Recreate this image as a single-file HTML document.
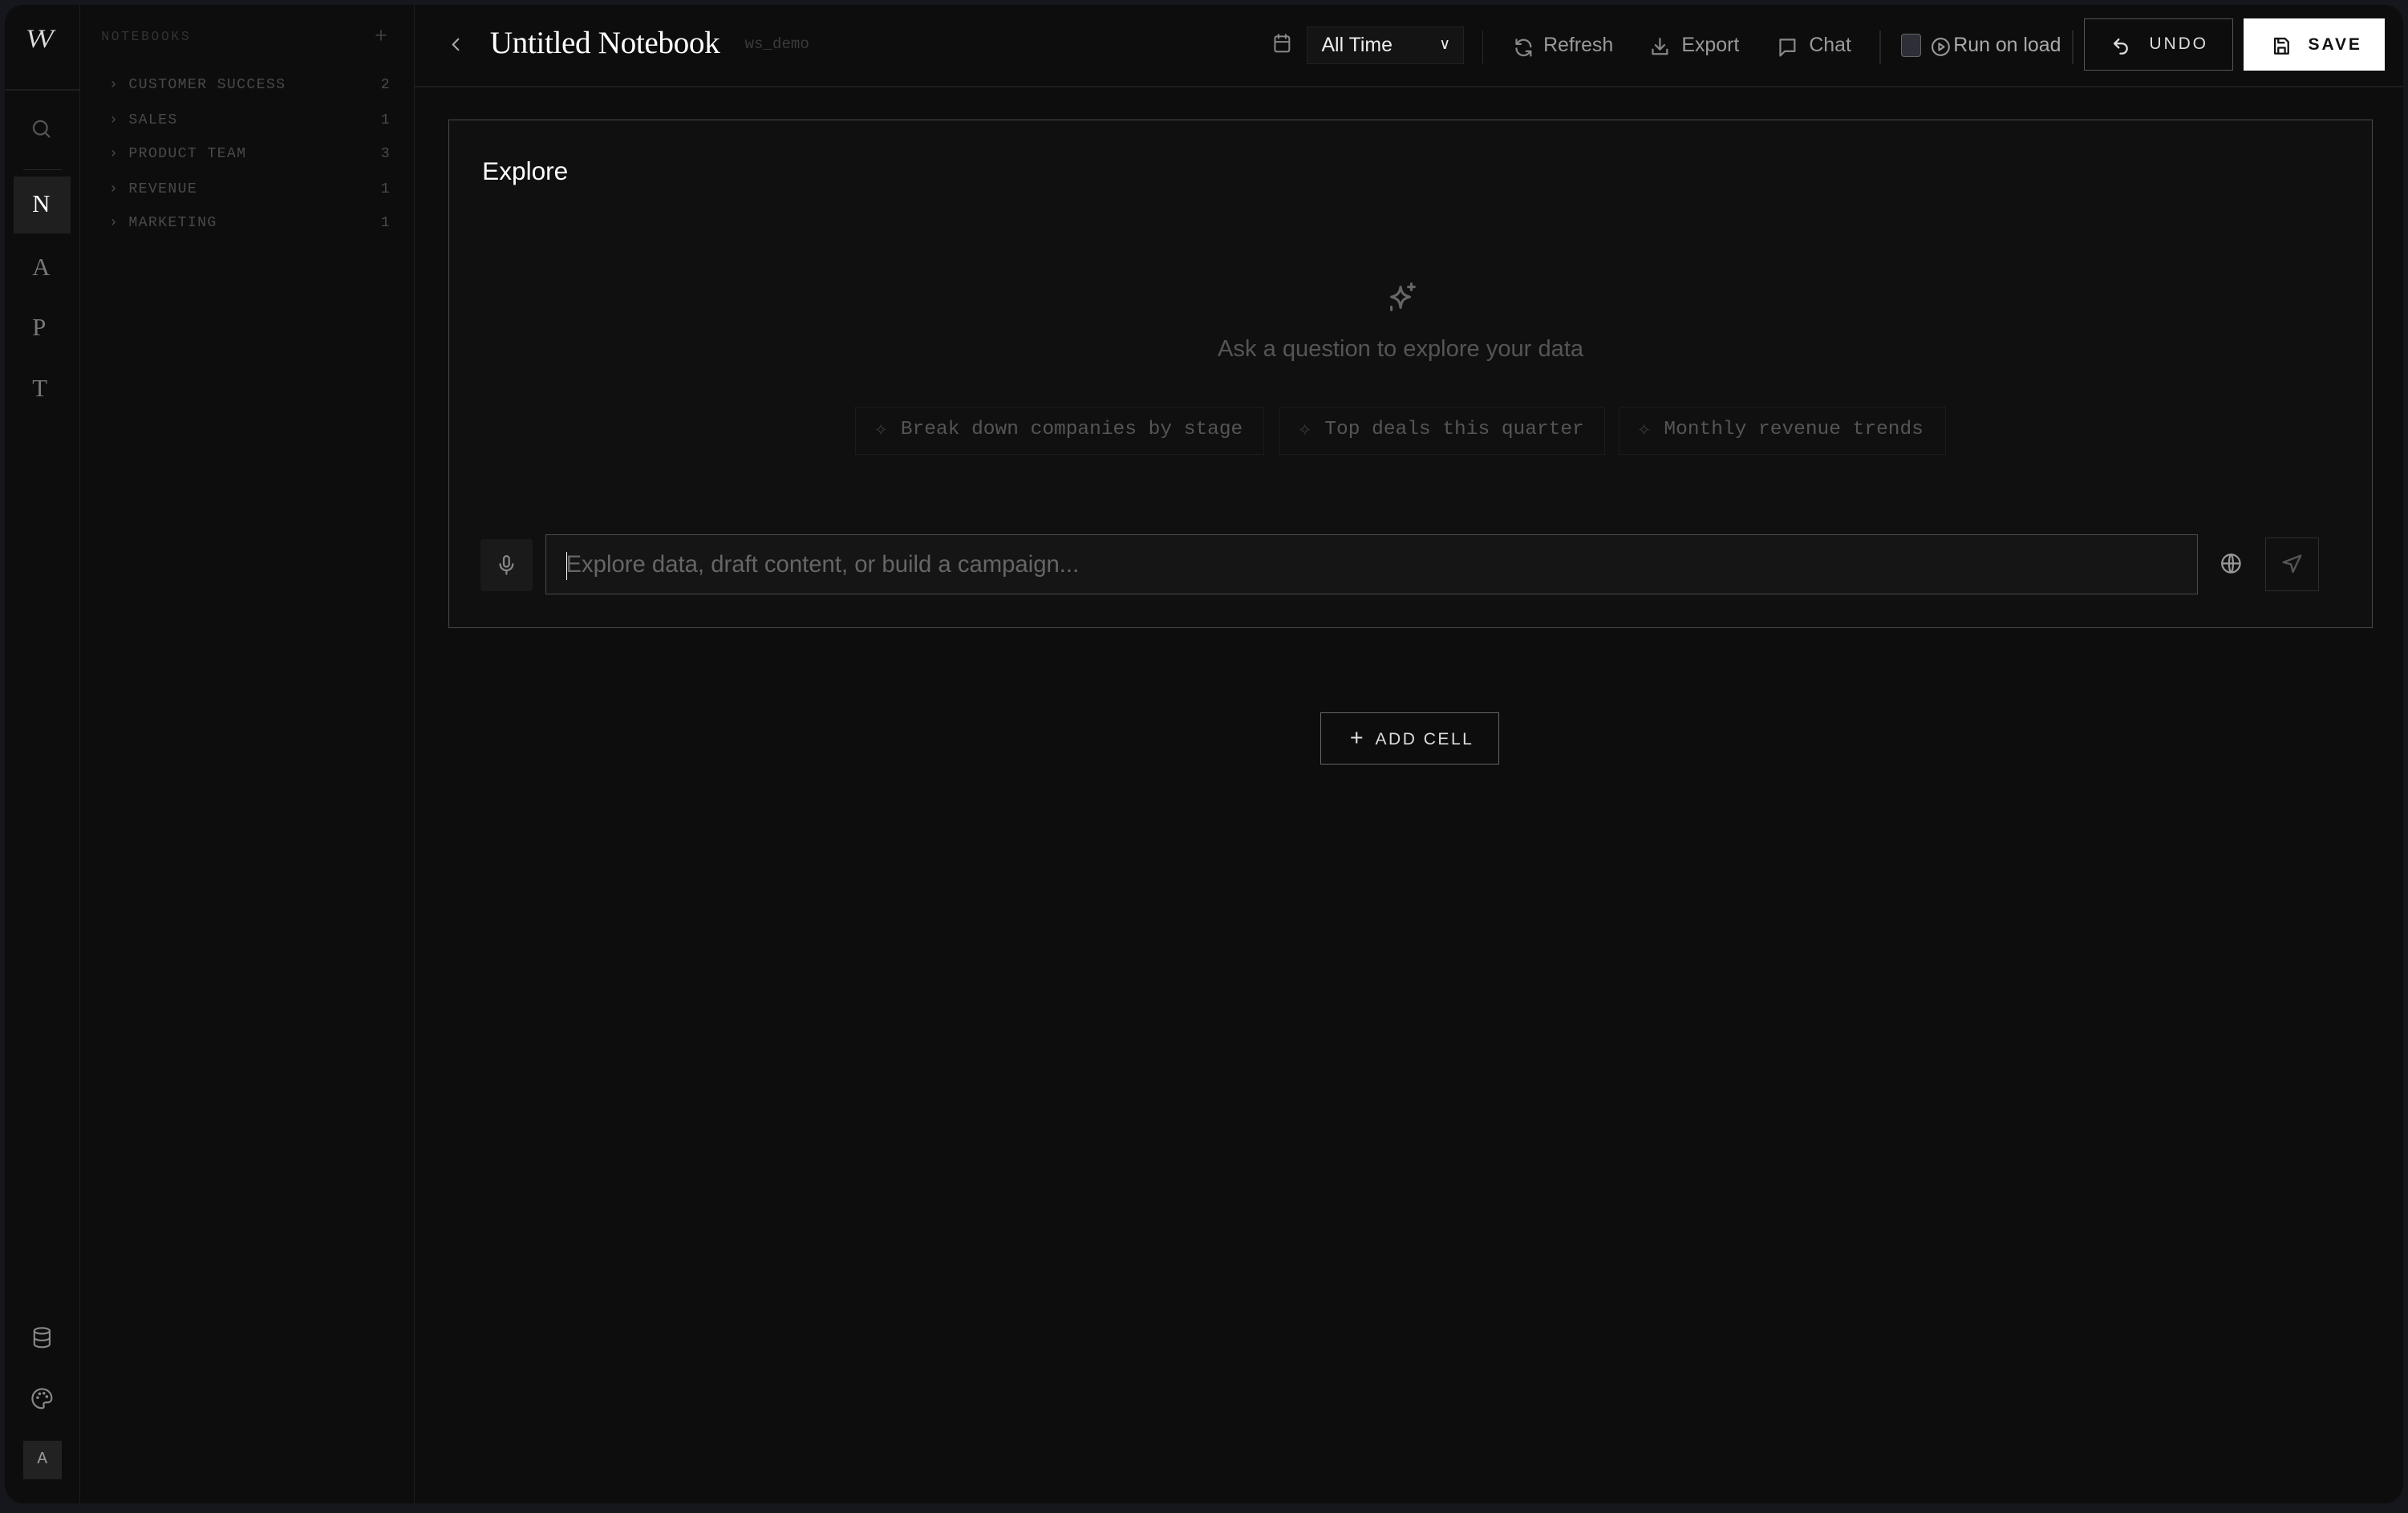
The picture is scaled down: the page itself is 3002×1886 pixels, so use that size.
<!DOCTYPE html>
<html><head><meta charset="utf-8"><style>
*{margin:0;padding:0;box-sizing:border-box}
html,body{width:3002px;height:1886px;overflow:hidden;background:#16171c}
#r{zoom:1.91454;width:1568px;height:985px;position:relative;font-family:"Liberation Sans",sans-serif;background:#16171c}
.app{position:absolute;left:3px;top:3px;width:1562px;height:976px;background:#0d0d0d;border-radius:12px;overflow:hidden}
.a{position:absolute}
.mono{font-family:"Liberation Mono",monospace}
svg{position:absolute;fill:none;stroke-linecap:round;stroke-linejoin:round}
.nb{font-family:"Liberation Mono",monospace;font-size:9.5px;letter-spacing:0.7px;color:#4a4a4a}
.tb{font-size:13px;color:#9a9a9a}
.chip{position:absolute;top:262px;height:31px;border:1px solid #1c1c1c;font-family:"Liberation Mono",monospace;font-size:12.8px;color:#555;line-height:29px;padding-left:29px}
.serif{font-family:"Liberation Serif",serif;color:#777;font-size:16px}
</style></head><body><div id="r"><div class="app">
<div class="a" style="left:0;top:0;width:49px;height:976px;border-right:1px solid #1e1e1e"></div>
<div class="a" style="left:0;top:55px;width:49px;height:1px;background:#1e1e1e"></div>
<div class="a" style="left:12px;top:107px;width:25px;height:1px;background:#262626"></div>
<div class="a serif" style="left:14px;top:13px;font-size:17px;color:#ddd;font-style:italic;letter-spacing:-3px">VV</div>
<svg style="left:17px;top:74px" width="14" height="14" viewBox="0 0 24 24" stroke="#555" stroke-width="2"><circle cx="11" cy="11" r="7.5"/><path d="M16.5 16.5 21 21"/></svg>
<div class="a" style="left:6px;top:112px;width:37px;height:37px;background:#1f1f1f"></div>
<div class="a serif" style="left:18px;top:121px;color:#fff;font-size:16px">N</div>
<div class="a serif" style="left:18px;top:162px">A</div>
<div class="a serif" style="left:18px;top:201px">P</div>
<div class="a serif" style="left:18px;top:241px">T</div>
<svg style="left:17px;top:860px" width="15" height="16" viewBox="0 0 24 24" stroke="#888" stroke-width="1.8"><ellipse cx="12" cy="5" rx="8" ry="3"/><path d="M4 5v14c0 1.7 3.6 3 8 3s8-1.3 8-3V5M4 12c0 1.7 3.6 3 8 3s8-1.3 8-3"/></svg>
<svg style="left:17px;top:900px" width="15" height="15" viewBox="0 0 24 24" stroke="#888" stroke-width="1.8"><path d="M12 2a10 10 0 0 0 0 20c1.5 0 2-1 2-2 0-1.5-1-2 0-3.2.8-1 2.5-.8 4-.8 2.5 0 4-1.8 4-4.5C22 6 17.5 2 12 2z"/><circle cx="7.5" cy="11" r=".6" fill="#888"/><circle cx="9.5" cy="7" r=".6" fill="#888"/><circle cx="14" cy="6.5" r=".6" fill="#888"/><circle cx="17" cy="10" r=".6" fill="#888"/></svg>
<div class="a" style="left:12px;top:935px;width:25px;height:25px;background:#222;color:#999;font-family:'Liberation Mono',monospace;font-size:11px;text-align:center;line-height:25px">A</div>
<div class="a" style="left:49px;top:0;width:218px;height:976px;border-right:1px solid #1e1e1e"></div>
<div class="a nb" style="left:63px;top:16px;font-size:8.5px;color:#333;letter-spacing:1.4px">NOTEBOOKS</div>
<div class="a" style="left:241px;top:12px;color:#3a3a3a;font-size:14px">+</div>
<div class="a nb" style="left:68px;top:47px">›&nbsp;CUSTOMER SUCCESS</div><div class="a nb" style="left:245px;top:47px">2</div>
<div class="a nb" style="left:68px;top:70px">›&nbsp;SALES</div><div class="a nb" style="left:245px;top:70px">1</div>
<div class="a nb" style="left:68px;top:92px">›&nbsp;PRODUCT TEAM</div><div class="a nb" style="left:245px;top:92px">3</div>
<div class="a nb" style="left:68px;top:115px">›&nbsp;REVENUE</div><div class="a nb" style="left:245px;top:115px">1</div>
<div class="a nb" style="left:68px;top:137px">›&nbsp;MARKETING</div><div class="a nb" style="left:245px;top:137px">1</div>
<div class="a" style="left:267px;top:53px;width:1295px;height:1px;background:#1e1e1e"></div>
<svg style="left:288px;top:20px" width="12" height="12" viewBox="0 0 24 24" stroke="#aaa" stroke-width="2.2"><path d="M15 5l-7 7 7 7"/></svg>
<div class="a" style="left:316px;top:13px;font-family:'Liberation Serif',serif;font-size:20.5px;color:#fff;letter-spacing:-.2px">Untitled Notebook</div>
<div class="a mono" style="left:482px;top:20px;font-size:10px;color:#3a3a3a">ws_demo</div>
<svg style="left:825px;top:18px" width="14" height="15" viewBox="0 0 24 24" stroke="#888" stroke-width="1.8"><rect x="4" y="4" width="16" height="17" rx="2"/><path d="M4 10h16M8 2v4M16 2v4"/></svg>
<div class="a" style="left:848px;top:14px;width:102px;height:25px;background:#141414;border:1px solid #222;color:#eee;font-size:13px;line-height:23px;padding-left:9px">All Time<span style="position:absolute;right:8px;top:0;font-size:10px">∨</span></div>
<div class="a" style="left:962px;top:17px;width:1px;height:22px;background:#262626"></div>
<svg style="left:982px;top:21px" width="14" height="14" viewBox="0 0 24 24" stroke="#888" stroke-width="2"><path d="M20 11a8 8 0 0 0-14-5l-2 2M4 3v5h5M4 13a8 8 0 0 0 14 5l2-2M20 21v-5h-5"/></svg>
<div class="a tb" style="left:1002px;top:19px">Refresh</div>
<svg style="left:1071px;top:20px" width="14" height="15" viewBox="0 0 24 24" stroke="#888" stroke-width="2"><path d="M12 3v12M7 10l5 5 5-5M4 15v5h16v-5"/></svg>
<div class="a tb" style="left:1092px;top:19px">Export</div>
<svg style="left:1154px;top:21px" width="14" height="14" viewBox="0 0 24 24" stroke="#888" stroke-width="2"><path d="M4 3h16v13H9l-5 5z"/></svg>
<div class="a tb" style="left:1175px;top:19px">Chat</div>
<div class="a" style="left:1221px;top:17px;width:1px;height:22px;background:#262626"></div>
<div class="a" style="left:1235px;top:19px;width:13px;height:15px;background:#2e2e36;border:1px solid #666;border-radius:2px"></div>
<svg style="left:1254px;top:21px" width="13" height="13" viewBox="0 0 24 24" stroke="#999" stroke-width="2"><circle cx="12" cy="12" r="10"/><path d="M10 8l6 4-6 4z"/></svg>
<div class="a tb" style="left:1269px;top:19px;color:#aaa">Run on load</div>
<div class="a" style="left:1346px;top:17px;width:1px;height:22px;background:#262626"></div>
<div class="a" style="left:1354px;top:9px;width:97px;height:34px;border:1px solid #555;color:#ddd;font-size:11px;letter-spacing:1.5px;line-height:32px;padding-left:42px">UNDO</div>
<svg style="left:1372px;top:20px" width="13" height="14" viewBox="0 0 24 24" stroke="#ddd" stroke-width="2.2"><path d="M9 4L4 9l5 5M4 9h9a6 6 0 0 1 0 12h-2"/></svg>
<div class="a" style="left:1458px;top:9px;width:92px;height:34px;background:#fff;color:#111;font-size:11px;letter-spacing:1.5px;line-height:34px;padding-left:42px;font-weight:bold">SAVE</div>
<svg style="left:1476px;top:20px" width="13" height="14" viewBox="0 0 24 24" stroke="#111" stroke-width="2.2"><path d="M4 3h12l4 4v14H4z"/><path d="M8 3v5h7M8 21v-7h8v7"/></svg>
<div class="a" style="left:289px;top:75px;width:1253px;height:331px;border:1px solid #4a4a4a;background:#101010"></div>
<div class="a" style="left:311px;top:99px;font-size:16.5px;color:#fff">Explore</div>
<svg style="left:898px;top:180px" width="24" height="24" viewBox="0 0 24 24" stroke="#666" stroke-width="1.6"><path d="M11 4c.6 4 2 5.5 6 6.5-4 1-5.4 2.5-6 7-.6-4.5-2-6-6-7 4-1 5.4-2.5 6-6.5zM18 2v4M16 4h4M5 17v2"/></svg>
<div class="a" style="left:0;width:1818px;top:216px;text-align:center;font-size:15.2px;color:#555">Ask a question to explore your data</div>
<div class="chip" style="left:554px;width:266px">Break down companies by stage</div>
<div class="chip" style="left:830px;width:212px">Top deals this quarter</div>
<div class="chip" style="left:1051px;width:213px">Monthly revenue trends</div>
<div class="a" style="left:566px;top:270px;color:#3a3a3a;font-size:11px">✧</div>
<div class="a" style="left:842px;top:270px;color:#3a3a3a;font-size:11px">✧</div>
<div class="a" style="left:1063px;top:270px;color:#3a3a3a;font-size:11px">✧</div>
<div class="a" style="left:310px;top:348px;width:34px;height:34px;background:#1a1a1a;border-radius:2px"></div>
<svg style="left:320px;top:357px" width="14" height="16" viewBox="0 0 24 24" stroke="#888" stroke-width="2"><rect x="9" y="2" width="6" height="12" rx="3"/><path d="M5 11a7 7 0 0 0 14 0M12 18v4"/></svg>
<div class="a" style="left:352px;top:345px;width:1076px;height:39px;border:1px solid #4a4a4a;background:#151515;font-size:15.3px;color:#666;line-height:39px;padding-left:13px"><span style="display:inline-block;width:1px;height:18px;background:#fff;vertical-align:middle;margin-right:-1px"></span>Explore data, draft content, or build a campaign...</div>
<svg style="left:1443px;top:357px" width="14" height="14" viewBox="0 0 24 24" stroke="#999" stroke-width="2"><circle cx="12" cy="12" r="10"/><path d="M2 12h20M12 2c3 3 3 17 0 20M12 2c-3 3-3 17 0 20"/></svg>
<div class="a" style="left:1472px;top:347px;width:35px;height:35px;border:1px solid #2e2e2e"></div>
<svg style="left:1482px;top:357px" width="15" height="15" viewBox="0 0 24 24" stroke="#555" stroke-width="2"><path d="M21 3L3 10l8 2 2 8z"/></svg>
<div class="a" style="left:857px;top:461px;width:116px;height:34px;border:1px solid #666;color:#ddd;font-size:11px;letter-spacing:1.3px;line-height:34px;padding-left:35px">ADD CELL</div>
<div class="a" style="left:876px;top:469px;color:#ddd;font-size:15px">+</div>
</div></div></body></html>
